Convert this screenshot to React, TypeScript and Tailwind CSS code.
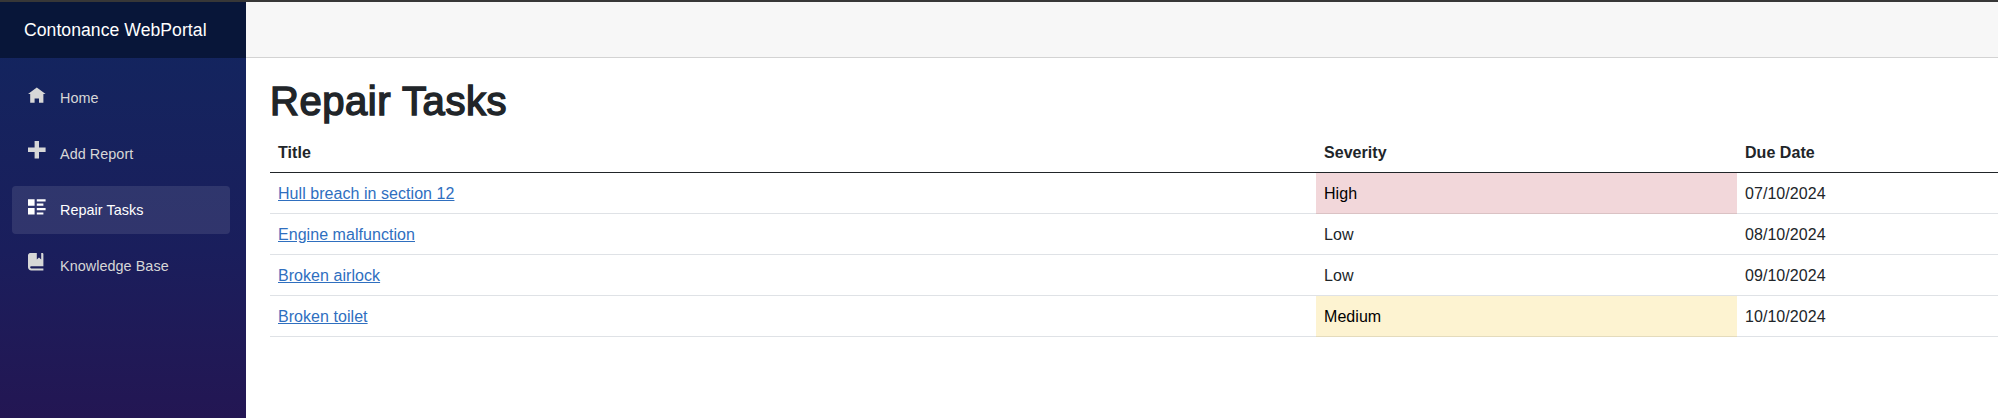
import React from "react";

type NavEntry = { label: string; path: string; active?: boolean };
type Task = { title: string; severity: "High" | "Medium" | "Low"; due: string };

const navEntries: NavEntry[] = [
  { label: "Home", path: "M4 1.1l-4 3h1v4h2v-2h2v2h2v-4.03l1 .03-4-3z" },
  { label: "Add Report", path: "M3 0v3h-3v2h3v3h2v-3h3v-2h-3v-3h-2z" },
  {
    label: "Repair Tasks",
    path: "M0 1v3h3v-3h-3zm4 0v1h4v-1h-4zm0 2v1h3v-1h-3zm-4 2v3h3v-3h-3zm4 0v1h4v-1h-4zm0 2v1h3v-1h-3z",
    active: true,
  },
  {
    label: "Knowledge Base",
    path: "M1 0l-.09.03c-.46.1-.79.43-.88.88l-.03.09v5.5c0 .83.67 1.5 1.5 1.5h5.5v-1h-5.5c-.28 0-.5-.22-.5-.5s.22-.5.5-.5h5.5v-5.5c0-.28-.22-.5-.5-.5h-.5v3l-1-1-1 1v-3h-3z",
  },
];

const tasks: Task[] = [
  { title: "Hull breach in section 12", severity: "High", due: "07/10/2024" },
  { title: "Engine malfunction", severity: "Low", due: "08/10/2024" },
  { title: "Broken airlock", severity: "Low", due: "09/10/2024" },
  { title: "Broken toilet", severity: "Medium", due: "10/10/2024" },
];

const severityStyles = {
  High: "bg-[#f2d7da] text-black border-[#dac2c4]",
  Medium: "bg-[#fdf3d1] text-black border-[#e4dbbc]",
  Low: "border-[#dfe2e6]",
};

function Sidebar() {
  return (
    <aside className="flex w-[246px] shrink-0 flex-col bg-linear-to-b from-[#11265f] via-[#1a1e5c] via-60% to-[#231653]">
      <div className="flex h-14 items-center bg-[#081639] pl-6 text-[17.6px] tracking-[0.05px] text-white">
        <span className="whitespace-nowrap">Contonance WebPortal</span>
      </div>
      <nav className="flex flex-col gap-2 pt-4 pr-4 pl-3">
        {navEntries.map((entry) => (
          <a
            key={entry.label}
            href="#"
            className={`flex h-12 items-center rounded pl-4 text-[14.4px] tracking-[0.05px] ${
              entry.active ? "bg-white/10 text-white" : "text-[#d7d7d7]"
            }`}
          >
            <svg
              viewBox="0 0 8 8"
              className="mr-[14.4px] -mt-2 size-[17.6px] overflow-visible fill-current"
            >
              <path d={entry.path} />
            </svg>
            <span className="mt-0.5 whitespace-nowrap">{entry.label}</span>
          </a>
        ))}
      </nav>
    </aside>
  );
}

function TaskTable() {
  return (
    <table className="w-full table-fixed border-separate border-spacing-0 text-left text-base leading-6 tracking-[0.05px]">
      <colgroup>
        <col className="w-[1046px]" />
        <col className="w-[421px]" />
        <col />
      </colgroup>
      <thead>
        <tr>
          {["Title", "Severity", "Due Date"].map((heading) => (
            <th
              key={heading}
              className="h-[41px] border-b border-[#212529] px-2 pt-[9px] pb-[7px] font-bold"
            >
              {heading}
            </th>
          ))}
        </tr>
      </thead>
      <tbody>
        {tasks.map((task) => (
          <tr key={task.title}>
            <td className="h-[41px] border-b border-[#dfe2e6] px-2 pt-[9px] pb-[7px]">
              <a href="#" className="text-[#2f6fbf] underline">
                {task.title}
              </a>
            </td>
            <td className={`border-b px-2 pt-[9px] pb-[7px] ${severityStyles[task.severity]}`}>
              {task.severity}
            </td>
            <td className="border-b border-[#dfe2e6] px-2 pt-[9px] pb-[7px]">{task.due}</td>
          </tr>
        ))}
      </tbody>
    </table>
  );
}

export default function App() {
  return (
    <div className="flex h-[418px] flex-col overflow-hidden border-t-2 border-[#373737] bg-white font-['Liberation_Sans',Arial,sans-serif] text-[#212529]">
      <div className="flex flex-1">
        <Sidebar />
        <main className="flex min-w-0 flex-1 flex-col">
          <header className="h-14 shrink-0 border-b border-[#d3d3d3] bg-[#f7f7f7]" />
          <article className="pt-[19px] pl-6">
            <h1 className="mb-[7px] text-[40px] leading-[48px] font-normal tracking-[0.55px] [-webkit-text-stroke:1.5px_#212529]">
              Repair Tasks
            </h1>
            <TaskTable />
          </article>
        </main>
      </div>
    </div>
  );
}
